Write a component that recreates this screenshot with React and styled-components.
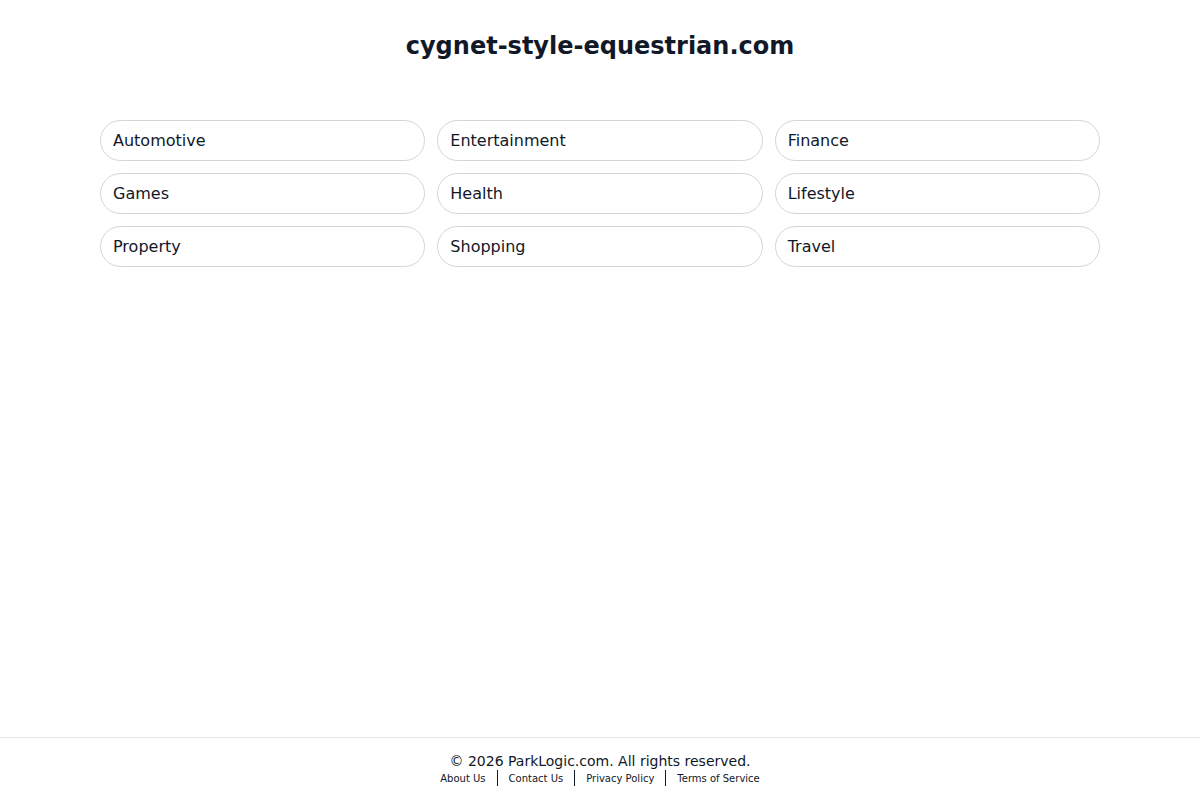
import React from "react";
import styled, { createGlobalStyle } from "styled-components";

const Global = createGlobalStyle`
  html, body { margin: 0; padding: 0; background: #fff; }
  body { font-family: "DejaVu Sans", sans-serif; color: #111827; }
`;

const Page = styled.div`
  min-height: 100vh;
  display: flex;
  flex-direction: column;
`;

const Header = styled.header`
  padding: 31px 0 0;
  text-align: center;
`;

const Title = styled.h1`
  margin: 0;
  font-size: 24px;
  line-height: 30px;
  font-weight: 700;
  color: #111827;
`;

const Grid = styled.main`
  width: 1000px;
  margin: 59px auto 0;
  display: grid;
  grid-template-columns: repeat(3, 1fr);
  gap: 12px;
`;

const Pill = styled.a`
  display: flex;
  align-items: center;
  height: 41px;
  box-sizing: border-box;
  padding: 0 12px;
  border: 1px solid #d1d5db;
  border-radius: 21px;
  font-size: 16px;
  color: #111827;
  text-decoration: none;
`;

const Footer = styled.footer`
  margin-top: auto;
  border-top: 1px solid #e5e7eb;
  padding: 14px 0 14px;
  text-align: center;
`;

const Copy = styled.div`
  font-size: 14px;
  line-height: 18px;
  color: #111827;
`;

const Links = styled.div`
  display: flex;
  justify-content: center;
  align-items: center;
  height: 16px;
`;

const FLink = styled.a`
  font-size: 10px;
  color: #111827;
  text-decoration: none;
`;

const Sep = styled.span`
  width: 1px;
  height: 16px;
  background: #111827;
  margin: 0 11px;
`;

const cats = ["Automotive", "Entertainment", "Finance", "Games", "Health", "Lifestyle", "Property", "Shopping", "Travel"];
const links = ["About Us", "Contact Us", "Privacy Policy", "Terms of Service"];

export default function App() {
  return (
    <Page>
      <Global />
      <Header>
        <Title>cygnet-style-equestrian.com</Title>
      </Header>
      <Grid>
        {cats.map((c) => (
          <Pill key={c} href="#">{c}</Pill>
        ))}
      </Grid>
      <Footer>
        <Copy>© 2026 ParkLogic.com. All rights reserved.</Copy>
        <Links>
          {links.map((l, i) => (
            <React.Fragment key={l}>
              {i > 0 && <Sep />}
              <FLink href="#">{l}</FLink>
            </React.Fragment>
          ))}
        </Links>
      </Footer>
    </Page>
  );
}
